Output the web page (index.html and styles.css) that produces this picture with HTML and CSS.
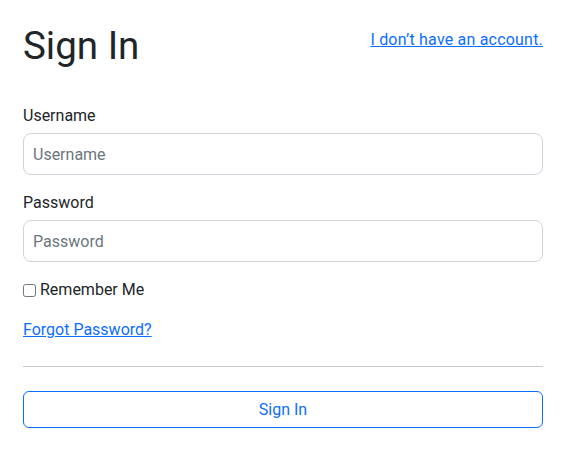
FILE: index.html
```html
<!DOCTYPE html>
<html lang="en">
<head>
<meta charset="utf-8">
<title>Sign In</title>
<link rel="stylesheet" href="styles.css">
</head>
<body>
<main class="page">
  <header class="head">
    <h1 class="title">Sign In</h1>
    <a class="link signup" href="#">I don’t have an account.</a>
  </header>
  <form class="form">
    <div class="field">
      <label class="label" for="u">Username</label>
      <input class="input" id="u" type="text" placeholder="Username">
    </div>
    <div class="field">
      <label class="label" for="p">Password</label>
      <input class="input" id="p" type="password" placeholder="Password">
    </div>
    <label class="check"><input class="box" type="checkbox">Remember Me</label>
    <a class="link forgot" href="#">Forgot Password?</a>
    <hr class="rule">
    <button class="btn" type="button">Sign In</button>
  </form>
</main>
</body>
</html>
```
FILE: styles.css
```css
* { box-sizing: border-box; }
html, body { margin: 0; background: #fff; }
body {
  font-family: Roboto, "Liberation Sans", sans-serif;
  font-size: 16px;
  line-height: 24px;
  color: #212529;
}
.page {
  width: 520px;
  margin-left: 23px;
  padding-top: 22px;
}
.head {
  display: flex;
  justify-content: space-between;
  align-items: flex-start;
}
.title {
  margin: 1px 0 0;
  font-size: 38.5px;
  font-weight: 400;
  line-height: 1.2;
}
.link { color: #0d6efd; text-decoration: underline; }
.signup { margin-top: 6px; letter-spacing: 0.2px; }
.form {
  display: flex;
  flex-direction: column;
  margin-top: 35px;
}
.field {
  display: flex;
  flex-direction: column;
  margin-bottom: 16px;
}
.label { margin-bottom: 5px; }
.input {
  height: 42px;
  padding: 0 9px;
  border: 1px solid #cfd3dc;
  border-radius: 8px;
  font: inherit;
  color: #212529;
  outline: none;
}
.input::placeholder { color: #6c757d; }
.check {
  display: flex;
  align-items: center;
}
.box {
  width: 13px;
  height: 13px;
  margin: 0 4px 0 0;
}
.forgot {
  align-self: flex-start;
  margin-top: 16px;
}
.rule {
  width: 100%;
  margin: 24px 0 24px;
  border: 0;
  border-top: 1px solid #c8c9ca;
}
.btn {
  height: 37px;
  border: 1px solid #0d6efd;
  border-radius: 6px;
  background: #fff;
  color: #0d6efd;
  font: inherit;
  cursor: pointer;
}
```
